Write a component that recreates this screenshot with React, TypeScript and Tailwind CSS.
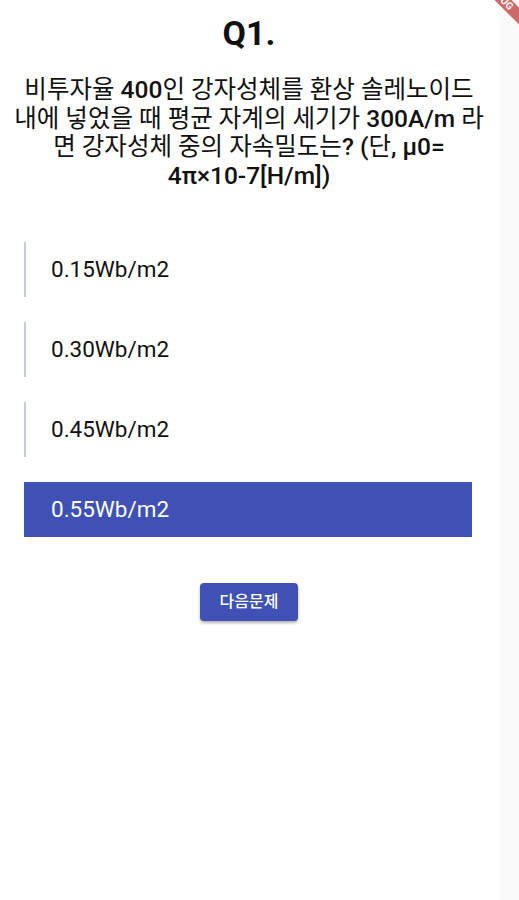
import React from 'react';

const options = ['0.15Wb/m2', '0.30Wb/m2', '0.45Wb/m2', '0.55Wb/m2'];
const selected = 3;

const FONT = "font-['Roboto','Noto_Sans_CJK_KR',sans-serif]";

// Latin runs render in Roboto medium, Hangul falls back to regular weight
function L({ children }: { children: React.ReactNode }) {
  return <span className="font-medium">{children}</span>;
}

function DebugBanner() {
  return (
    <div className="absolute top-0 right-0 w-[80px] h-[80px] overflow-hidden pointer-events-none">
      <div className="absolute left-[-9px] top-[-9.5px] w-[140px] h-[12px] rotate-45 bg-[#b71c1c]/65 flex items-center justify-center">
        <span className="text-[10px] leading-none font-bold tracking-wide text-white">DEBUG</span>
      </div>
    </div>
  );
}

export default function App() {
  return (
    <div className={`relative flex w-[519px] h-[900px] bg-white text-[#111] ${FONT}`}>
      <div className="w-[498px] flex flex-col items-center">
        {/* Question number */}
        <h1 className="mt-[13px] text-[34px] leading-[40px] font-bold">Q1.</h1>

        {/* Question text */}
        <div className="mt-[23px] w-full text-center text-[24.5px] leading-[28.5px] font-normal">
          <div className="whitespace-nowrap">비투자율 <L>400</L>인 강자성체를 환상 솔레노이드</div>
          <div className="whitespace-nowrap">내에 넣었을 때 평균 자계의 세기가 <L>300A/m</L> 라</div>
          <div className="whitespace-nowrap">면 강자성체 중의 자속밀도는<L>? (</L>단<L>, μ0=</L></div>
          <div className="whitespace-nowrap"><L>4π×10-7[H/m])</L></div>
        </div>

        {/* Options */}
        <div className="mt-[52px] w-full px-[24px] flex flex-col gap-[25px]">
          {options.map((opt, i) => (
            <div
              key={opt}
              className={
                i === selected
                  ? 'h-[55px] w-[448px] flex items-center pl-[27px] bg-[#3f51b5] text-white text-[22.5px]'
                  : 'h-[55px] w-[448px] flex items-center pl-[25px] border-l-2 border-[#c5cae0] text-[#111] text-[22.5px]'
              }
            >
              {opt}
            </div>
          ))}
        </div>

        {/* Next button */}
        <button className="mt-[46px] w-[98px] h-[38px] rounded-[4px] bg-[#3f51b5] text-white text-[16px] font-medium shadow-[0_2px_3px_rgba(0,0,0,0.3)]">
          다음문제
        </button>
      </div>
      <div className="w-[21px] h-full bg-[#fafafa]" />
      <DebugBanner />
    </div>
  );
}
